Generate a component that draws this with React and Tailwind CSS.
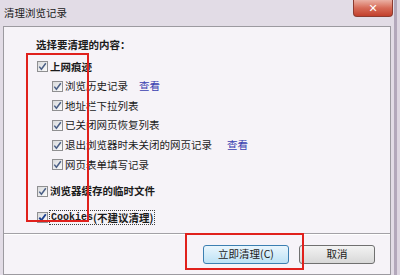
import React from "react";

const font = { fontFamily: '"Noto Sans CJK SC", "Noto Sans", sans-serif' };

function Box({ focused }) {
  return (
    <span className="relative inline-block w-[11px] h-[11px] shrink-0 border border-[#8f8f91] bg-gradient-to-br from-[#d9dadc] to-[#fbfbfb]">
      <svg viewBox="0 0 11 11" className="absolute left-[-1px] top-[-1px] w-[11px] h-[11px]">
        <path
          d="M2.3 5.6 L4.4 8.2 L8.8 2.2"
          fill="none"
          stroke={focused ? "#1c3f8f" : "#4b5f86"}
          strokeWidth={focused ? "1.9" : "1.5"}
        />
      </svg>
    </span>
  );
}

function Row({ children, sub, link, linkGap, bold }) {
  return (
    <div className={`flex items-center h-[19.6px] gap-[2px] ${sub ? "pl-[48px]" : "pl-[33px]"}`}>
      <Box />
      <span className={`text-[10.5px] leading-none text-[#1b1b1b] ${bold ? "font-bold" : ""}`}>{children}</span>
      {link && (
        <span className={`text-[10.5px] leading-none text-[#3a3fb0] ${linkGap}`}>查看</span>
      )}
    </div>
  );
}

export default function App() {
  return (
    <div className="w-[400px] h-[275px] overflow-hidden flex bg-[#e2dce6] relative" style={font}>
      <div className="w-[394px] flex flex-col">
        <div className="h-[26px] flex items-start shrink-0">
          <div className="pl-[4px] pt-[8px] text-[10.5px] leading-none text-[#202020]">清理浏览记录</div>
          <div className="ml-auto mr-[1px] w-[40px] h-[17px] rounded-b-[4px] border border-t-0 border-[#8c3b30] bg-gradient-to-b from-[#eab0a4] via-[#d66a57] to-[#c23f2c] flex items-center justify-center">
            <span className="text-white text-[11px] font-bold leading-none" style={{ fontFamily: '"DejaVu Sans", sans-serif' }}>✕</span>
          </div>
        </div>
        <div className="flex-1 ml-[3px] mr-[3px] border border-[#9c9aa0] bg-[#f6f3f8] flex flex-col">
          <div className="pl-[32px] pt-[10px] h-[26px] text-[10.5px] font-bold leading-[16px] text-[#1b1b1b]">选择要清理的内容：</div>
          <div className="mt-[4px] flex flex-col">
            <Row bold>上网痕迹</Row>
            <Row sub link linkGap="ml-[9px]">浏览历史记录</Row>
            <Row sub>地址栏下拉列表</Row>
            <Row sub>已关闭网页恢复列表</Row>
            <Row sub link linkGap="ml-[13px]">退出浏览器时未关闭的网页记录</Row>
            <Row sub>网页表单填写记录</Row>
          </div>
          <div className="mt-[7px]">
            <Row bold>浏览器缓存的临时文件</Row>
          </div>
          <div className="mt-[7px] flex items-center h-[19.6px] pl-[33px] gap-[1px]">
            <Box focused />
            <span className="flex items-center h-[15px] px-[1px] border border-dotted border-[#404040] text-[10.5px] font-bold leading-none text-[#1b1b1b]">
              <span className="text-[10px]" style={{ fontFamily: '"Liberation Mono", monospace' }}>Cookies</span>
              <span>(不建议清理)</span>
            </span>
          </div>
          <div className="mt-[5px] h-[1px] bg-[#a3a1a6] border-b border-white box-content"></div>
          <div className="pt-[10px] pr-[15px] flex justify-end gap-[10px]">
            <div className="w-[86px] h-[19px] rounded-[3px] border border-[#3c7fb1] bg-gradient-to-b from-[#eaf6fd] to-[#bde2f5] flex items-center justify-center text-[10.5px] leading-none text-[#1b1b1b]">
              立即清理(C)
            </div>
            <div className="w-[76px] h-[19px] rounded-[3px] border border-[#707070] bg-gradient-to-b from-[#f3f3f3] to-[#d8d8d8] flex items-center justify-center text-[10.5px] leading-none text-[#1b1b1b]">
              取消
            </div>
          </div>
        </div>
      </div>
      <div className="w-[3px] bg-[#b3a8bb]"></div>
      <div className="flex-1 bg-[#ddd6e1]"></div>
      <div className="absolute left-[26px] top-[53px] w-[63px] h-[169px] border-2 border-[#e0201c] pointer-events-none"></div>
      <div className="absolute left-[185px] top-[233px] w-[119px] h-[37px] border-2 border-[#e0201c] pointer-events-none"></div>
    </div>
  );
}
